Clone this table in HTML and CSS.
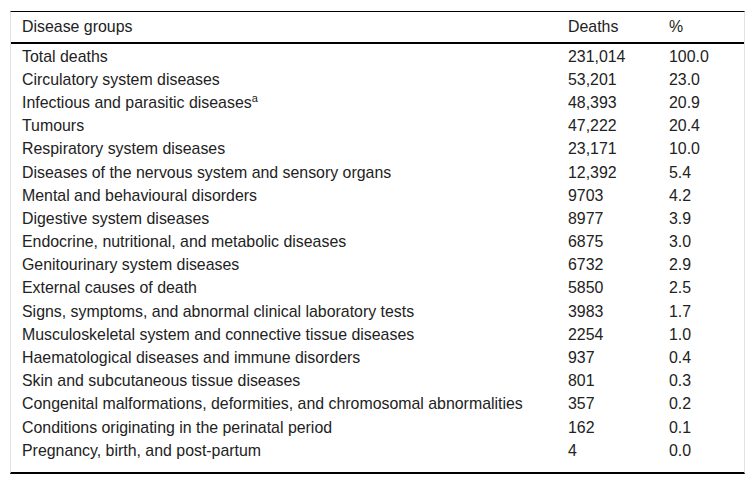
FILE: index.html
```html
<!DOCTYPE html>
<html>
<head>
<meta charset="utf-8">
<link rel="stylesheet" href="styles.css">
</head>
<body>
<div class="wrap">
<table class="tbl">
<thead>
<tr><th class="c1">Disease groups</th><th class="c2">Deaths</th><th class="c3">%</th></tr>
</thead>
<tbody>
<tr><td>Total deaths</td><td>231,014</td><td>100.0</td></tr>
<tr><td>Circulatory system diseases</td><td>53,201</td><td>23.0</td></tr>
<tr><td>Infectious and parasitic diseases<sup>a</sup></td><td>48,393</td><td>20.9</td></tr>
<tr><td>Tumours</td><td>47,222</td><td>20.4</td></tr>
<tr><td>Respiratory system diseases</td><td>23,171</td><td>10.0</td></tr>
<tr><td>Diseases of the nervous system and sensory organs</td><td>12,392</td><td>5.4</td></tr>
<tr><td>Mental and behavioural disorders</td><td>9703</td><td>4.2</td></tr>
<tr><td>Digestive system diseases</td><td>8977</td><td>3.9</td></tr>
<tr><td>Endocrine, nutritional, and metabolic diseases</td><td>6875</td><td>3.0</td></tr>
<tr><td>Genitourinary system diseases</td><td>6732</td><td>2.9</td></tr>
<tr><td>External causes of death</td><td>5850</td><td>2.5</td></tr>
<tr><td>Signs, symptoms, and abnormal clinical laboratory tests</td><td>3983</td><td>1.7</td></tr>
<tr><td>Musculoskeletal system and connective tissue diseases</td><td>2254</td><td>1.0</td></tr>
<tr><td>Haematological diseases and immune disorders</td><td>937</td><td>0.4</td></tr>
<tr><td>Skin and subcutaneous tissue diseases</td><td>801</td><td>0.3</td></tr>
<tr><td>Congenital malformations, deformities, and chromosomal abnormalities</td><td>357</td><td>0.2</td></tr>
<tr><td>Conditions originating in the perinatal period</td><td>162</td><td>0.1</td></tr>
<tr class="last"><td>Pregnancy, birth, and post-partum</td><td>4</td><td>0.0</td></tr>
</tbody>
</table>
</div>
</body>
</html>
```
FILE: styles.css
```css
html, body {
  margin: 0;
  padding: 0;
  background: #fff;
}
.wrap {
  padding: 11px 0 0 10px;
}
.tbl {
  width: 735px;
  border-collapse: separate;
  border-spacing: 0;
  border-top: 1px solid #000;
  border-bottom: 2px solid #000;
  border-left: 1px solid #e2e2e2;
  border-right: 1px solid #e2e2e2;
  font-family: "Liberation Sans", Arial, sans-serif;
  font-size: 15.9px;
  color: #222;
}
.tbl th {
  font-weight: normal;
  text-align: left;
  line-height: 16px;
  padding: 7px 0 7px 11px;
  border-bottom: 2px solid #000;
}
.tbl td {
  line-height: 16px;
  height: 16px;
  padding: 4.6px 0 2.6px 11px;
  white-space: nowrap;
}
.tbl .c1 { width: 535px; }
.tbl .c2 { width: 90px; }
.tbl tr.last td {
  padding-bottom: 13px;
}
.tbl sup {
  font-size: 11px;
  line-height: 0;
  vertical-align: 6px;
}
```
